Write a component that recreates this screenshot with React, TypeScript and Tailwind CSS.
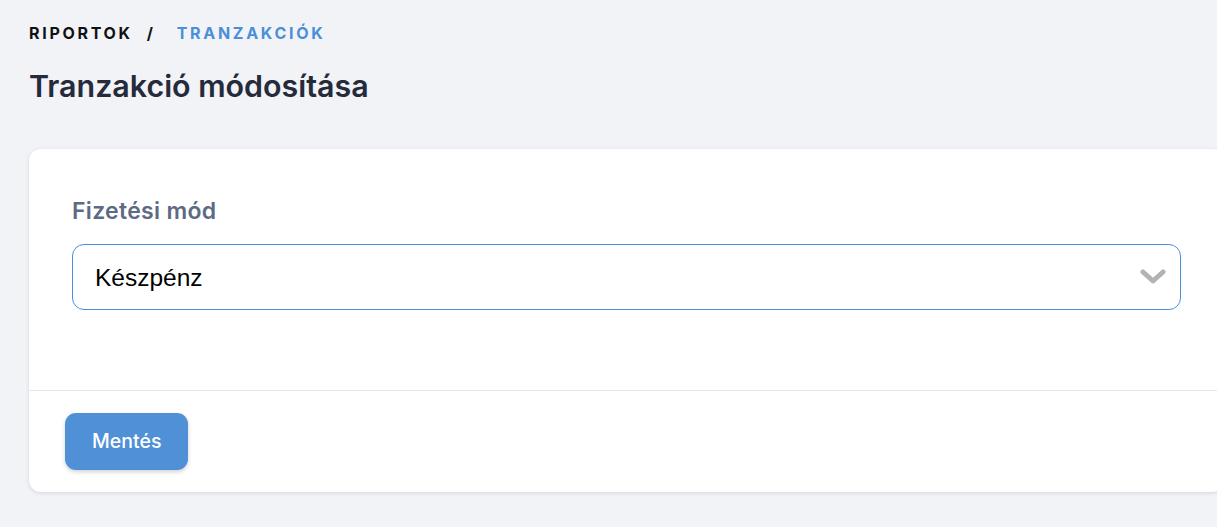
export default function App() {
  return (
    <div className="min-h-[527px] w-full overflow-hidden bg-[#f2f3f7] font-['Inter',sans-serif]">
      <div className="px-[29px] pt-[22px]">
        {/* Breadcrumb */}
        <nav className="flex items-center text-[16px] font-bold leading-[22px] tracking-[2.7px]">
          <span className="text-[#111111]">RIPORTOK</span>
          <span className="ml-[14px] mr-[21px] text-[#111111]">/</span>
          <span className="text-[#4a8fd9]">TRANZAKCIÓK</span>
        </nav>

        <h1 className="mt-[22px] text-[30.4px] font-semibold leading-[40px] text-[#252b3b]">
          Tranzakció módosítása
        </h1>

        {/* Card */}
        <div className="mt-[43px] w-[1195px] rounded-[12px] bg-white shadow-[0_1px_4px_rgba(0,0,0,0.12)]">
          <div className="px-[43px] pb-[80px] pt-[48px]">
            <label className="block text-[23px] font-semibold leading-[28px] tracking-[0.3px] text-[#5e6a84]">
              Fizetési mód
            </label>
            <div className="relative mt-[19px]">
              <select className="h-[66px] w-full appearance-none rounded-[12px] border border-[#4a8fd9] bg-white pb-[1px] pl-[22px] pr-[60px] pt-[3px] font-['Liberation_Sans',sans-serif] text-[24.5px] text-black outline-none">
                <option>Készpénz</option>
              </select>
              <svg
                className="pointer-events-none absolute right-[15px] top-1/2 h-[20px] w-[26px] -translate-y-1/2"
                viewBox="0 0 26 20"
                fill="none"
              >
                <path
                  d="M3 5 L13 14 L23 5"
                  stroke="#b3b3b3"
                  strokeWidth="5"
                  strokeLinecap="round"
                  strokeLinejoin="round"
                />
              </svg>
            </div>
          </div>

          <div className="border-t border-[#e3e8f0] px-[36px] pb-[22px] pt-[22px]">
            <button className="h-[57px] rounded-[11px] bg-[#4f90d7] px-[27px] text-[19.5px] font-medium text-white shadow-[0_2px_4px_rgba(0,0,0,0.18)]">
              Mentés
            </button>
          </div>
        </div>
      </div>
    </div>
  );
}
